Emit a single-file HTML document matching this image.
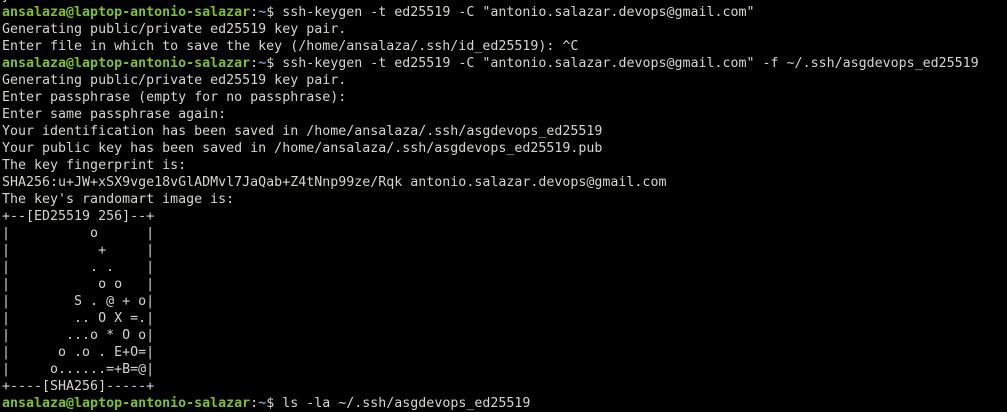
<!DOCTYPE html>
<html><head><meta charset="utf-8"><style>
html,body{margin:0;padding:0;background:#000;width:1007px;height:400px;overflow:hidden}
pre{margin:0;position:absolute;left:2px;top:-13px;font-family:"DejaVu Sans Mono","Liberation Mono",monospace;font-size:13.3px;line-height:17px;color:#d3d7cf;white-space:pre}
.g{color:#7ec22a;font-weight:bold}
.b{color:#729fcf;font-weight:bold}
</style></head><body>
<pre>y :
<span class="g">ansalaza@laptop-antonio-salazar</span>:<span class="b">~</span>$ ssh-keygen -t ed25519 -C "antonio.salazar.devops@gmail.com"
Generating public/private ed25519 key pair.
Enter file in which to save the key (/home/ansalaza/.ssh/id_ed25519): ^C
<span class="g">ansalaza@laptop-antonio-salazar</span>:<span class="b">~</span>$ ssh-keygen -t ed25519 -C "antonio.salazar.devops@gmail.com" -f ~/.ssh/asgdevops_ed25519
Generating public/private ed25519 key pair.
Enter passphrase (empty for no passphrase):
Enter same passphrase again:
Your identification has been saved in /home/ansalaza/.ssh/asgdevops_ed25519
Your public key has been saved in /home/ansalaza/.ssh/asgdevops_ed25519.pub
The key fingerprint is:
SHA256:u+JW+xSX9vge18vGlADMvl7JaQab+Z4tNnp99ze/Rqk antonio.salazar.devops@gmail.com
The key's randomart image is:
+--[ED25519 256]--+
|          o      |
|           +     |
|          . .    |
|           o o   |
|        S . @ + o|
|        .. O X =.|
|       ...o * O o|
|      o .o . E+O=|
|     o......=+B=@|
+----[SHA256]-----+
<span class="g">ansalaza@laptop-antonio-salazar</span>:<span class="b">~</span>$ ls -la ~/.ssh/asgdevops_ed25519
</pre>
</body></html>
